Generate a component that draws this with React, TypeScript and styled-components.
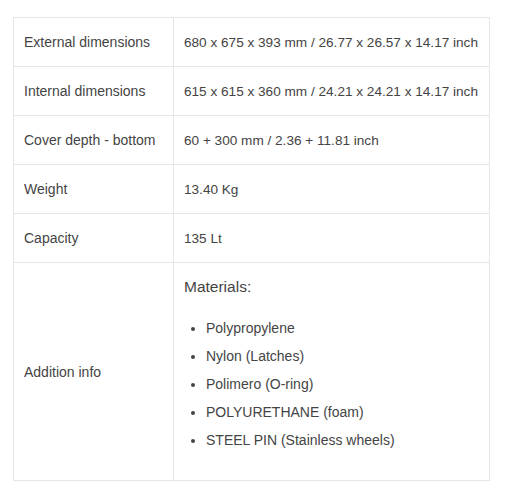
import React from "react";
import styled, { createGlobalStyle } from "styled-components";

const GlobalStyle = createGlobalStyle`
  body {
    margin: 0;
    background: #fff;
    font-family: "Liberation Sans", Arial, sans-serif;
    color: #444;
  }
`;

const specs = [
  { label: "External dimensions", value: "680 x 675 x 393 mm / 26.77 x 26.57 x 14.17 inch" },
  { label: "Internal dimensions", value: "615 x 615 x 360 mm / 24.21 x 24.21 x 14.17 inch" },
  { label: "Cover depth - bottom", value: "60 + 300 mm / 2.36 + 11.81 inch" },
  { label: "Weight", value: "13.40 Kg" },
  { label: "Capacity", value: "135 Lt" },
];

const materials = [
  "Polypropylene",
  "Nylon (Latches)",
  "Polimero (O-ring)",
  "POLYURETHANE (foam)",
  "STEEL PIN (Stainless wheels)",
];

export default function App() {
  return (
    <>
      <GlobalStyle />
      <Wrapper>
        <SpecTable>
          <colgroup>
            <col style={{ width: 160 }} />
            <col />
          </colgroup>
          <tbody>
            {specs.map((s) => (
              <tr key={s.label}>
                <Cell>{s.label}</Cell>
                <Cell $value>{s.value}</Cell>
              </tr>
            ))}
            <tr>
              <Cell>Addition info</Cell>
              <Cell $value $tall>
                <Heading>Materials:</Heading>
                <MaterialList>
                  {materials.map((m) => (
                    <li key={m}>{m}</li>
                  ))}
                </MaterialList>
              </Cell>
            </tr>
          </tbody>
        </SpecTable>
      </Wrapper>
    </>
  );
}

const Wrapper = styled.div`
  padding: 17px 20px 0 13px;
`;

const SpecTable = styled.table`
  width: 477px;
  table-layout: fixed;
  border-collapse: collapse;
  font-size: 14px;
`;

const Cell = styled.td<{ $value?: boolean; $tall?: boolean }>`
  height: 48px;
  padding: ${(p) => (p.$tall ? "12px 10px" : "0 10px")};
  border: 1px solid #e6e6e6;
  vertical-align: middle;
  white-space: nowrap;
  font-size: ${(p) => (p.$value ? "13.6px" : "14px")};
`;

const Heading = styled.p`
  margin: 0;
  font-size: 15.5px;
  line-height: 24px;
`;

const MaterialList = styled.ul`
  margin: 15px 0 14px;
  padding-left: 22px;
  font-size: 14px;

  li {
    line-height: 28px;
  }
`;
